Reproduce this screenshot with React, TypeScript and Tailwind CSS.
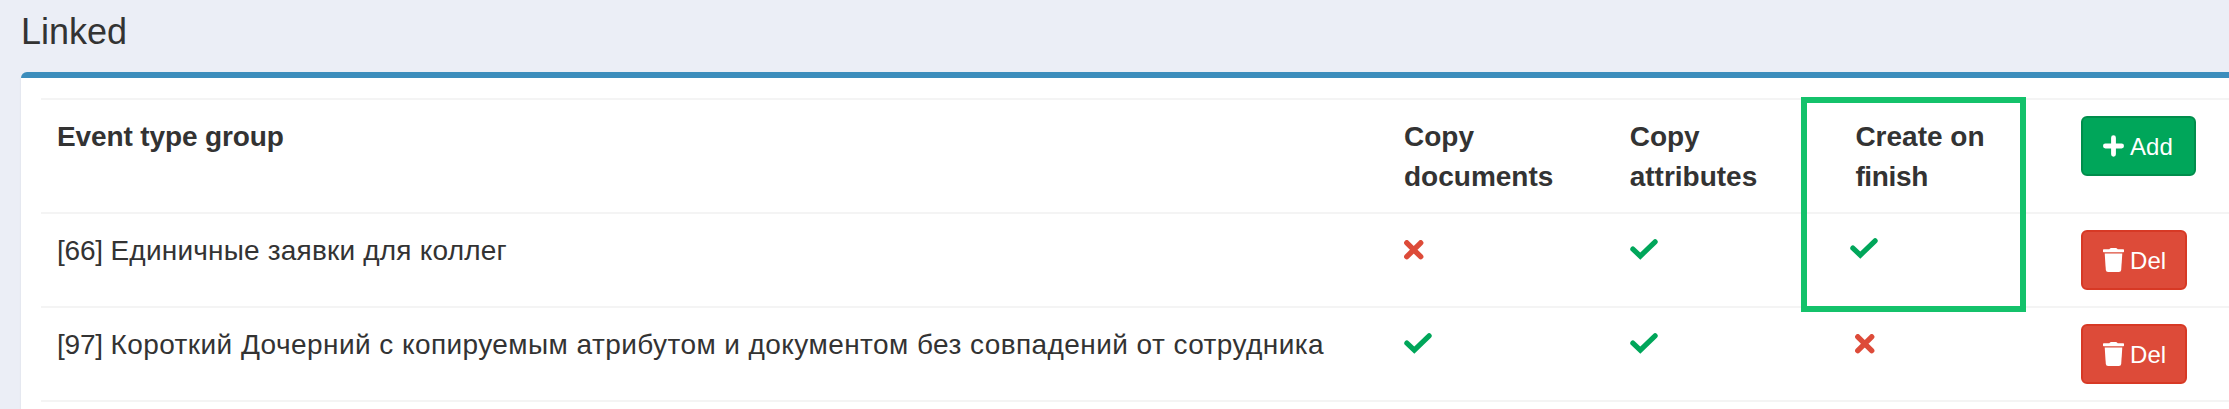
type Row = { id: string; name: string; spacing: string; flags: boolean[]; nudged?: number };

const rows: Row[] = [
  {
    id: "[66] ",
    name: "Единичные заявки для коллег",
    spacing: "tracking-[0.2px]",
    flags: [false, true, true],
    nudged: 2,
  },
  {
    id: "[97] ",
    name: "Короткий Дочерний с копируемым атрибутом и документом без совпадений от сотрудника",
    spacing: "tracking-[0.43px]",
    flags: [true, true, false],
  },
];

const grid =
  "grid grid-cols-[1347px_225.7px_225.7px_225.7px_1fr] border-t-2 border-[#f4f4f4]";
const cell = "px-4 pt-[17px] pb-[15px]";
const button =
  "flex h-[60px] items-center rounded-md border-2 px-5 text-2xl leading-9 text-white";

function Cross() {
  return (
    <svg viewBox="0 0 19.5 19.5" className="mt-[9px] h-[19.5px] w-[19.5px] text-[#dd4b39]" fill="none" stroke="currentColor" strokeWidth="5.4" strokeLinecap="round">
      <path d="M2.8 2.8 16.7 16.7M16.7 2.8 2.8 16.7" />
    </svg>
  );
}

function Check({ nudged }: { nudged: boolean }) {
  return (
    <svg
      viewBox="0 0 28 21"
      className={`h-[21px] w-7 text-[#00a65a] ${nudged ? "-ml-[5px] mt-[7px]" : "mt-2"}`}
      fill="none"
      stroke="currentColor"
      strokeWidth="5.2"
      strokeLinecap="round"
    >
      <path d="M2.9 10.1 10.3 17.1 25.1 2.8" />
    </svg>
  );
}

function Plus() {
  return (
    <svg viewBox="0 0 21 22" className="mr-[6px] h-[22px] w-[21px] shrink-0" fill="none" stroke="currentColor" strokeWidth="4.8" strokeLinecap="round">
      <path d="M10.5 2.7V19.3M2.4 11H18.6" />
    </svg>
  );
}

function Trash() {
  return (
    <svg viewBox="0 0 21 24" className="mr-[6px] h-6 w-[21px] shrink-0" fill="currentColor">
      <path d="M.7 1.3H6.3L7 .5Q7.4 0 8 0H13Q13.6 0 14 .5L14.7 1.3H20.3Q21 1.3 21 2V3.6Q21 4.3 20.3 4.3H.7Q0 4.3 0 3.6V2Q0 1.3 .7 1.3Z" />
      <path d="M1.7 5.5H19.3L18.2 21.9Q18 24 15.9 24H5.1Q3 24 2.8 21.9Z" />
    </svg>
  );
}

export default function App() {
  return (
    <div className="h-[409px] w-[2229px] overflow-hidden bg-[#ebeef6] pl-[21px] font-['Liberation_Sans',Arial,sans-serif] text-[28px] leading-10 text-[#333]">
      <h3 className="h-[72px] pt-3 text-4xl leading-10">Linked</h3>
      <section className="relative h-[400px] w-[2260px] rounded-md border-t-6 border-[#3c8dbc] bg-white pl-5 pt-5 shadow-[0_2px_2px_rgba(0,0,0,0.1)]">
        <div className={grid}>
          <div className={`${cell} font-bold tracking-[-0.12px]`}>Event type group</div>
          <div className={`${cell} font-bold`}>Copy<br />documents</div>
          <div className={`${cell} font-bold`}>Copy<br />attributes</div>
          <div className={`${cell} font-bold`}>
            Create on<br /><span className="tracking-[-0.35px]">finish</span>
          </div>
          <div className="flex items-start p-4">
            <button className={`${button} w-[115px] border-[#008d4c] bg-[#00a65a]`}>
              <Plus />
              <span className="pt-0.5">Add</span>
            </button>
          </div>
        </div>
        {rows.map((row) => (
          <div key={row.id} className={grid}>
            <div className={`${cell} whitespace-pre ${row.spacing}`}>
              <span className="tracking-[-0.2px]">{row.id}</span>
              {row.name}
            </div>
            {row.flags.map((on, i) => (
              <div key={i} className={cell}>
                {on ? <Check nudged={row.nudged === i} /> : <Cross />}
              </div>
            ))}
            <div className="flex items-start p-4">
              <button className={`${button} w-[106px] border-[#d73925] bg-[#dd4b39]`}>
                <Trash />
                <span className="pt-0.5">Del</span>
              </button>
            </div>
          </div>
        ))}
        <div className="border-t-2 border-[#f4f4f4]" />
        <div className="absolute left-[1780px] top-[19px] h-[215px] w-[225px] border-6 border-[#14c26b]" />
      </section>
    </div>
  );
}
